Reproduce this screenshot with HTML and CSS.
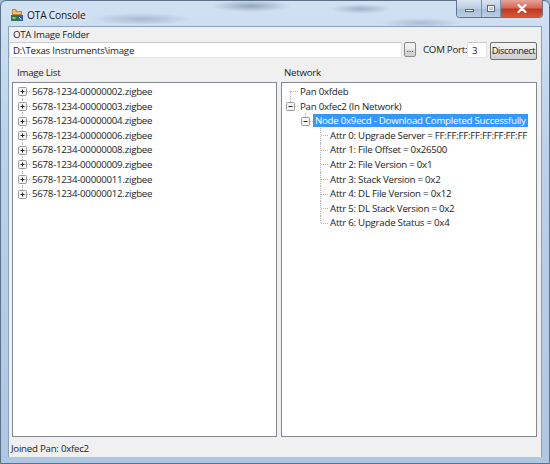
FILE: index.html
```html
<!DOCTYPE html>
<html>
<head>
<meta charset="utf-8">
<link rel="stylesheet" href="styles.css">
</head>
<body>
<div class="window">
  <div class="titlebar">
    <svg class="appicon" viewBox="0 0 14 14" width="14" height="14">
      <path d="M2 1h4l1 2h5v4H2z" fill="#c8833a"/>
      <path d="M3 2h2l1 2h5v2H3z" fill="#f2c16a"/>
      <rect x="1" y="7" width="6" height="6" fill="#2f7a3c"/>
      <rect x="7" y="7" width="6" height="6" fill="#2e62a8"/>
      <path d="M2.5 10h3M9 9l2 2.5" stroke="#fff" stroke-width="1"/>
    </svg>
    <span class="title">OTA Console</span>
    <div class="caption-btns">
      <div class="cbtn min"><span class="min-glyph"></span></div>
      <div class="cbtn max"><span class="max-glyph"></span></div>
      <div class="cbtn close">
        <svg viewBox="0 0 10 9" width="10" height="9"><path d="M1.5 1l7 7M8.5 1l-7 7" stroke="#fff" stroke-width="2.2" stroke-linecap="round"/></svg>
      </div>
    </div>
  </div>
  <div class="client">
    <div class="folder-label">OTA Image Folder</div>
    <div class="path-row">
      <div class="field path">D:\Texas Instruments\image</div>
      <div class="btn dots">...</div>
      <div class="com-label">COM Port:</div>
      <div class="field port">3</div>
      <div class="btn disconnect">Disconnect</div>
    </div>
    <div class="panels">
      <div class="panel left">
        <div class="panel-label">Image List</div>
        <div class="tree">
          <div class="row"><span class="col first"><svg class="pbox" viewBox="0 0 9 9"><rect x=".5" y=".5" width="8" height="8" rx="1" fill="#f4f4f4" stroke="#9a9a9a"/><path d="M2.5 4.5h4M4.5 2.5v4" stroke="#222"/></svg></span><span class="label">5678-1234-00000002.zigbee</span></div>
          <div class="row"><span class="col mid"><svg class="pbox" viewBox="0 0 9 9"><rect x=".5" y=".5" width="8" height="8" rx="1" fill="#f4f4f4" stroke="#9a9a9a"/><path d="M2.5 4.5h4M4.5 2.5v4" stroke="#222"/></svg></span><span class="label">5678-1234-00000003.zigbee</span></div>
          <div class="row"><span class="col mid"><svg class="pbox" viewBox="0 0 9 9"><rect x=".5" y=".5" width="8" height="8" rx="1" fill="#f4f4f4" stroke="#9a9a9a"/><path d="M2.5 4.5h4M4.5 2.5v4" stroke="#222"/></svg></span><span class="label">5678-1234-00000004.zigbee</span></div>
          <div class="row"><span class="col mid"><svg class="pbox" viewBox="0 0 9 9"><rect x=".5" y=".5" width="8" height="8" rx="1" fill="#f4f4f4" stroke="#9a9a9a"/><path d="M2.5 4.5h4M4.5 2.5v4" stroke="#222"/></svg></span><span class="label">5678-1234-00000006.zigbee</span></div>
          <div class="row"><span class="col mid"><svg class="pbox" viewBox="0 0 9 9"><rect x=".5" y=".5" width="8" height="8" rx="1" fill="#f4f4f4" stroke="#9a9a9a"/><path d="M2.5 4.5h4M4.5 2.5v4" stroke="#222"/></svg></span><span class="label">5678-1234-00000008.zigbee</span></div>
          <div class="row"><span class="col mid"><svg class="pbox" viewBox="0 0 9 9"><rect x=".5" y=".5" width="8" height="8" rx="1" fill="#f4f4f4" stroke="#9a9a9a"/><path d="M2.5 4.5h4M4.5 2.5v4" stroke="#222"/></svg></span><span class="label">5678-1234-00000009.zigbee</span></div>
          <div class="row"><span class="col mid"><svg class="pbox" viewBox="0 0 9 9"><rect x=".5" y=".5" width="8" height="8" rx="1" fill="#f4f4f4" stroke="#9a9a9a"/><path d="M2.5 4.5h4M4.5 2.5v4" stroke="#222"/></svg></span><span class="label">5678-1234-00000011.zigbee</span></div>
          <div class="row"><span class="col last"><svg class="pbox" viewBox="0 0 9 9"><rect x=".5" y=".5" width="8" height="8" rx="1" fill="#f4f4f4" stroke="#9a9a9a"/><path d="M2.5 4.5h4M4.5 2.5v4" stroke="#222"/></svg></span><span class="label">5678-1234-00000012.zigbee</span></div>
        </div>
      </div>
      <div class="splitter"></div>
      <div class="panel right">
        <div class="panel-label">Network</div>
        <div class="tree net">
          <div class="row"><span class="col first"></span><span class="label">Pan 0xfdeb</span></div>
          <div class="row"><span class="col last"><svg class="pbox" viewBox="0 0 9 9"><rect x=".5" y=".5" width="8" height="8" rx="1" fill="#f4f4f4" stroke="#9a9a9a"/><path d="M2.5 4.5h4" stroke="#222"/></svg></span><span class="label">Pan 0xfec2 (In Network)</span></div>
          <div class="row"><span class="col blank"></span><span class="col last"><svg class="pbox" viewBox="0 0 9 9"><rect x=".5" y=".5" width="8" height="8" rx="1" fill="#f4f4f4" stroke="#9a9a9a"/><path d="M2.5 4.5h4" stroke="#222"/></svg></span><span class="label selected">Node 0x9ecd - Download Completed Successfully</span></div>
          <div class="row"><span class="col blank"></span><span class="col blank"></span><span class="col mid"></span><span class="label">Attr 0: Upgrade Server = FF:FF:FF:FF:FF:FF:FF:FF</span></div>
          <div class="row"><span class="col blank"></span><span class="col blank"></span><span class="col mid"></span><span class="label">Attr 1: File Offset = 0x26500</span></div>
          <div class="row"><span class="col blank"></span><span class="col blank"></span><span class="col mid"></span><span class="label">Attr 2: File Version = 0x1</span></div>
          <div class="row"><span class="col blank"></span><span class="col blank"></span><span class="col mid"></span><span class="label">Attr 3: Stack Version = 0x2</span></div>
          <div class="row"><span class="col blank"></span><span class="col blank"></span><span class="col mid"></span><span class="label">Attr 4: DL File Version = 0x12</span></div>
          <div class="row"><span class="col blank"></span><span class="col blank"></span><span class="col mid"></span><span class="label">Attr 5: DL Stack Version = 0x2</span></div>
          <div class="row"><span class="col blank"></span><span class="col blank"></span><span class="col last"></span><span class="label">Attr 6: Upgrade Status = 0x4</span></div>
        </div>
      </div>
    </div>
    <div class="status">Joined Pan: 0xfec2</div>
  </div>
  <div class="bottom-frame"></div>
</div>
</body>
</html>
```
FILE: styles.css
```css
* { box-sizing: border-box; }
html, body { margin: 0; padding: 0; }
body {
  width: 550px;
  height: 464px;
  overflow: hidden;
  font-family: "Open Sans", "Noto Sans", sans-serif;
  font-size: 9.7px;
  letter-spacing: -0.25px;
  color: #1b1b1b;
  background: #9fb8d4;
}
.window {
  width: 550px;
  height: 464px;
  display: flex;
  flex-direction: column;
  border: 1px solid #5d7189;
  border-radius: 6px 6px 0 0;
  background:
    radial-gradient(ellipse 40px 6px at 250px 5px, rgba(90,110,140,0.5), transparent),
    radial-gradient(ellipse 30px 5px at 360px 8px, rgba(90,110,140,0.4), transparent),
    radial-gradient(ellipse 50px 6px at 140px 18px, rgba(120,140,165,0.45), transparent),
    radial-gradient(ellipse 40px 5px at 420px 22px, rgba(120,140,165,0.4), transparent),
    linear-gradient(to bottom, #d0e1f2 0%, #bcd2ea 30%, #aec7e2 100%);
}
.titlebar {
  height: 26px;
  display: flex;
  align-items: center;
  padding-left: 9px;
  position: relative;
}
.appicon { margin-right: 3px; margin-top: 2px; }
.title {
  font-size: 10.2px;
  letter-spacing: -0.2px;
  color: #111;
  margin-top: 3px;
  text-shadow: 0 0 6px rgba(255,255,255,0.9), 0 0 3px rgba(255,255,255,0.9);
}
.caption-btns {
  position: absolute;
  right: 6px;
  top: -1px;
  display: flex;
  border: 1px solid #5f7691;
  border-top: none;
  border-radius: 0 0 4px 4px;
  overflow: hidden;
  height: 18px;
}
.cbtn {
  height: 100%;
  display: flex;
  align-items: center;
  justify-content: center;
}
.cbtn.min, .cbtn.max {
  width: 25px;
  background: linear-gradient(to bottom, #d8e4f1 0%, #bccee3 50%, #a7bdd8 51%, #b9cde4 100%);
  border-right: 1px solid #7890ab;
}
.cbtn.max { width: 19px; }
.min-glyph {
  width: 9px; height: 3px;
  background: #fff;
  border: 1px solid #51657e;
  margin-top: 4px;
}
.max-glyph {
  width: 8px; height: 7px;
  border: 1px solid #51657e;
  box-shadow: inset 0 0 0 1px #fff;
  background: transparent;
}
.cbtn.close {
  width: 41px;
  background: linear-gradient(to bottom, #e7a498 0%, #d66a56 45%, #c2381f 55%, #d5593c 100%);
}
.client {
  flex: 1;
  margin: 0 7px 0 7px;
  background: #f0f0f0;
  border: 1px solid #8aa0bb;
  border-bottom: none;
  display: flex;
  flex-direction: column;
}
.folder-label {
  height: 15px;
  line-height: 15px;
  padding-left: 4px;
}
.path-row {
  height: 18px;
  display: flex;
  align-items: flex-start;
  padding-right: 4px;
  white-space: nowrap;
}
.field {
  height: 16px;
  line-height: 15px;
  background: #fff;
  border: 1px solid #e2e3e6;
  border-top-color: #c9cbd0;
}
.path { flex: 1; padding-left: 3px; }
.btn {
  border: 1px solid #8a8a8a;
  border-radius: 2px;
  background: linear-gradient(to bottom, #f4f4f4 0%, #ebebeb 48%, #dcdcdc 52%, #cfcfcf 100%);
  text-align: center;
}
.dots {
  width: 12px;
  height: 15px;
  margin-left: 2px;
  line-height: 12px;
  font-size: 9px;
  letter-spacing: 0;
  flex: none;
}
.com-label {
  margin-left: 7px;
  width: 42px;
  line-height: 16px;
  flex: none;
}
.port {
  width: 20px;
  margin-left: 2px;
  padding-left: 4px;
  flex: none;
}
.disconnect {
  width: 47px;
  height: 18px;
  margin-left: 3px;
  line-height: 16px;
  font-size: 9.3px;
  letter-spacing: -0.45px;
  padding: 0;
  border-color: #707070;
  flex: none;
}
.panels {
  flex: 1;
  display: flex;
}
.panel {
  display: flex;
  flex-direction: column;
}
.panel.left { width: 268px; }
.splitter { width: 3px; }
.panel.right { flex: 1; }
.panel-label {
  height: 22px;
  padding-top: 6px;
  line-height: 14px;
}
.panel.left .panel-label { padding-left: 8px; }
.panel.right .panel-label { padding-left: 4px; }
.tree {
  height: 355px;
  background: #fff;
  border: 1px solid #828790;
  padding-top: 1px;
  overflow: hidden;
}
.panel.left .tree { margin-left: 3px; padding-left: 2px; }
.panel.right .tree { margin-left: 1px; margin-right: 4px; padding-left: 1px; }
.row {
  height: 14.6px;
  display: flex;
  align-items: center;
  white-space: nowrap;
}
.col {
  width: 15px;
  height: 100%;
  position: relative;
  flex: none;
}
.col:not(.blank)::before {
  content: "";
  position: absolute;
  left: 7px;
  top: 0;
  bottom: 0;
  border-left: 1px dotted #b4b4b4;
}
.col.first::before { top: 50%; }
.col.last::before { bottom: 50%; }
.col:not(.blank)::after {
  content: "";
  position: absolute;
  left: 8px;
  top: 50%;
  width: 7px;
  border-top: 1px dotted #b4b4b4;
}
.pbox {
  position: absolute;
  left: 3px;
  top: 50%;
  width: 9px;
  height: 9px;
  margin-top: -4px;
  z-index: 1;
}
.label {
  padding: 0 2px 0 2px;
  line-height: 13px;
}
.selected {
  background: #3399ff;
  color: #fff;
  padding: 0 2px;
}
.status {
  height: 17px;
  line-height: 17px;
  padding-left: 2px;
  margin-top: 3px;
}
.bottom-frame { height: 6px; }
```
